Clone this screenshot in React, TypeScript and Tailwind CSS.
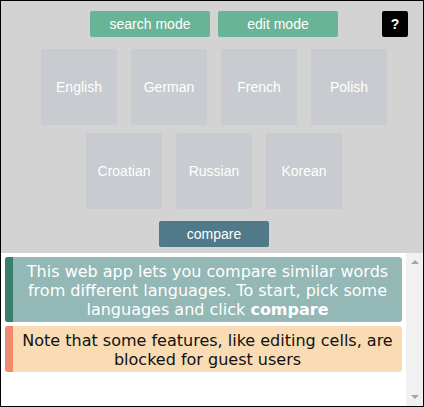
const languages = [
  ["English", "German", "French", "Polish"],
  ["Croatian", "Russian", "Korean"],
];

function Tile({ name }: { name: string }) {
  return (
    <div className="mx-[7px] flex h-[76px] w-[76px] items-center justify-center rounded-[2px] bg-[#c8cbcf] text-[14px] text-white">
      {name}
    </div>
  );
}

export default function App() {
  return (
    <div className="flex h-[407px] w-[424px] flex-col border border-black font-['Liberation_Sans',Arial,sans-serif]">
      <div className="relative flex h-[252px] flex-col items-center bg-[#d3d3d3] pl-1 pt-[10px]">
        <div className="flex gap-2">
          <button className="h-[26px] w-[120px] rounded-[2px] bg-[#69b396] text-[14px] text-white">
            search mode
          </button>
          <button className="h-[26px] w-[120px] rounded-[2px] bg-[#69b396] text-[14px] text-white">
            edit mode
          </button>
        </div>
        <button className="absolute right-[15px] top-[10px] flex h-[26px] w-[26px] items-center justify-center rounded-[2px] bg-black text-[14px] font-bold text-white">
          ?
        </button>
        <div className="mt-3 flex flex-col gap-2">
          {languages.map((row, i) => (
            <div key={i} className="flex justify-center">
              {row.map((l) => (
                <Tile key={l} name={l} />
              ))}
            </div>
          ))}
        </div>
        <button className="mt-3 h-[26px] w-[110px] rounded-[2px] bg-[#507a8a] text-[14px] text-white">
          compare
        </button>
      </div>
      <div className="flex flex-1 bg-white">
        <div className="flex flex-1 flex-col gap-1 p-1 font-['DejaVu_Sans',Verdana,sans-serif] text-[16px] leading-[19px]">
          <div className="flex overflow-hidden rounded-[3px] bg-[#93b8b5]">
            <div className="w-2 bg-[#3a7d6a]" />
            <p className="flex-1 pb-[3px] pt-[5px] text-center text-white">
              This web app lets you compare similar words from different languages. To start, pick some languages and click <b>compare</b>
            </p>
          </div>
          <div className="flex overflow-hidden rounded-[3px] bg-[#fadcb4]">
            <div className="w-2 bg-[#f08b6d]" />
            <p className="flex-1 pb-[3px] pt-[5px] text-center text-[#111]">
              Note that some features, like editing cells, are blocked for guest users
            </p>
          </div>
        </div>
        <div className="flex w-[17px] flex-col items-center justify-between bg-[#f1f1f1] py-[7px]">
          <div className="h-0 w-0 border-x-[4px] border-b-[4px] border-x-transparent border-b-[#a3a3a3]" />
          <div className="h-0 w-0 border-x-[4px] border-t-[4px] border-x-transparent border-t-[#a3a3a3]" />
        </div>
      </div>
    </div>
  );
}
